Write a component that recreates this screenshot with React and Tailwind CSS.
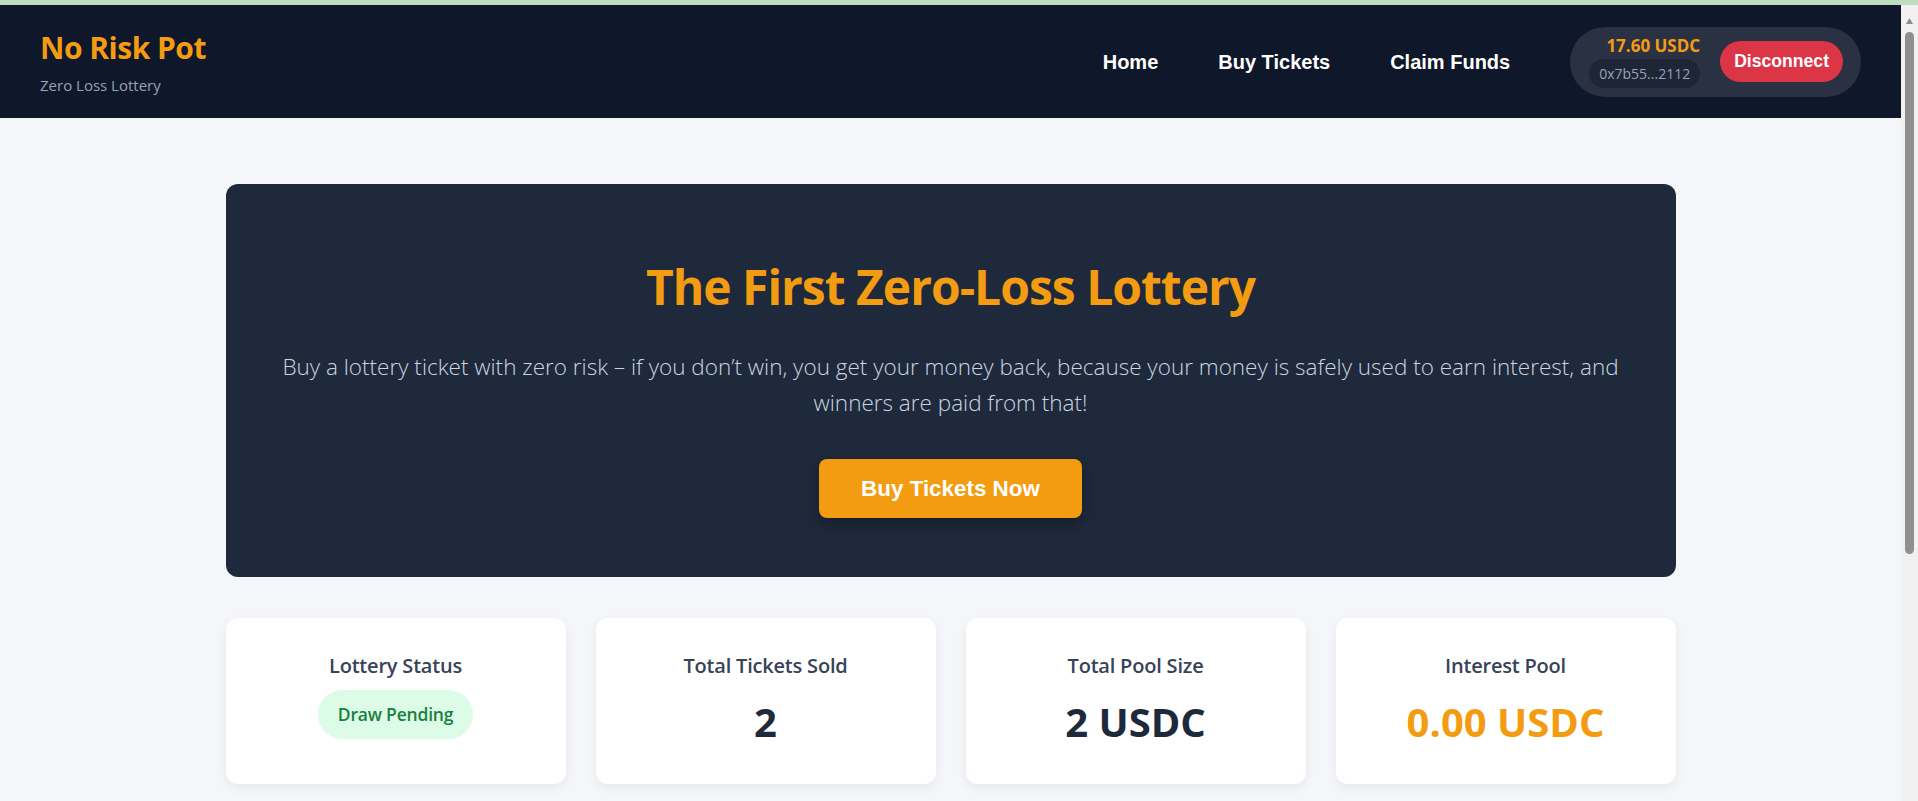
import React from "react";

const stats = [
  { label: "Lottery Status", badge: "Draw Pending" },
  { label: "Total Tickets Sold", value: "2", color: "text-[#1e293b]" },
  { label: "Total Pool Size", value: "2 USDC", color: "text-[#1e293b]" },
  { label: "Interest Pool", value: "0.00 USDC", color: "text-[#f39c12]" },
];

function Navbar() {
  return (
    <header className="h-[113px] shrink-0 bg-[#0f172a] px-10 flex items-center justify-between">
      <div className="flex flex-col">
        <h1 className="text-[30px] leading-[36px] font-bold text-[#f39c12] tracking-[-0.5px]">No Risk Pot</h1>
        <span className="mt-[10px] text-[15px] leading-[18px] text-[#94a3b8]">Zero Loss Lottery</span>
      </div>
      <nav className="flex items-center gap-[60px]">
        {["Home", "Buy Tickets", "Claim Funds"].map((l) => (
          <button key={l} className="font-['Liberation_Sans',Arial,sans-serif] text-[20px] font-bold text-white">
            {l}
          </button>
        ))}
        <div className="h-[70px] rounded-full bg-[#2a3142] pl-[19px] pr-[18px] flex items-center gap-5">
          <div className="flex flex-col items-end">
            <span className="text-[17px] leading-[20px] font-bold text-[#f39c12]">17.60 USDC</span>
            <span className="mt-[3px] h-[29px] px-[10px] rounded-full bg-[#1e2535] text-[14px] text-[#94a3b8] flex items-center">0x7b55...2112</span>
          </div>
          <button className="h-[41px] px-[14px] rounded-full bg-[#dc3545] font-['Liberation_Sans',Arial,sans-serif] text-[17.6px] font-bold text-white">
            Disconnect
          </button>
        </div>
      </nav>
    </header>
  );
}

function Hero() {
  return (
    <section className="rounded-xl bg-[#1e293b] pt-[73px] pb-[59px] flex flex-col items-center text-center">
      <h2 className="text-[48px] leading-[60px] font-bold text-[#f39c12] tracking-[-1px]">The First Zero-Loss Lottery</h2>
      <p className="mt-[32px] text-[22.5px] leading-[36px] font-light text-[#cbd5e1]">
        Buy a lottery ticket with zero risk – if you don’t win, you get your money back, because your money is safely used to earn interest, and
        <br />
        winners are paid from that!
      </p>
      <button className="mt-[38px] h-[59px] px-[42px] rounded-lg bg-[#f39c12] font-['Liberation_Sans',Arial,sans-serif] text-[22.4px] font-bold text-white shadow-[0_6px_16px_rgba(0,0,0,0.3)]">
        Buy Tickets Now
      </button>
    </section>
  );
}

function StatCard({ s }) {
  return (
    <div className="h-[166px] rounded-xl bg-white shadow-[0_4px_12px_rgba(15,23,42,0.06)] pt-[34px] flex flex-col items-center">
      <div className="text-[20px] leading-[28px] font-semibold text-[#374357] tracking-[-0.2px]">{s.label}</div>
      {s.badge ? (
        <span className="mt-[10px] h-[49px] px-[20px] rounded-full bg-[#dcfce7] text-[17.5px] font-semibold text-[#1a7f3c] flex items-center tracking-[-0.2px]">
          {s.badge}
        </span>
      ) : (
        <div className={`mt-[22px] text-[40px] leading-[40px] font-bold ${s.color}`}>{s.value}</div>
      )}
    </div>
  );
}

function Scrollbar() {
  return (
    <div className="w-[17px] shrink-0 bg-[#f1f1f1] flex flex-col items-center">
      <svg width="9" height="8" viewBox="0 0 9 8" className="mt-[12px]">
        <path d="M4.5 1 L8 7 L1 7 Z" fill="#8b8b8b" />
      </svg>
      <div className="mt-[7px] w-[9px] h-[522px] rounded-full bg-[#8f8f8f]" />
    </div>
  );
}

export default function App() {
  return (
    <div className="h-screen overflow-hidden flex flex-col bg-[#f5f6fa] font-['Open_Sans',sans-serif]">
      <div className="h-[5px] shrink-0 bg-[#c0dcc0]" />
      <div className="flex flex-1 min-h-0">
        <div className="flex-1 min-w-0 flex flex-col">
          <Navbar />
          <main className="w-[1450px] mx-auto pt-[66px] pb-20">
            <Hero />
            <div className="mt-[41px] grid grid-cols-4 gap-[30px]">
              {stats.map((s) => (
                <StatCard key={s.label} s={s} />
              ))}
            </div>
          </main>
        </div>
        <Scrollbar />
      </div>
    </div>
  );
}
